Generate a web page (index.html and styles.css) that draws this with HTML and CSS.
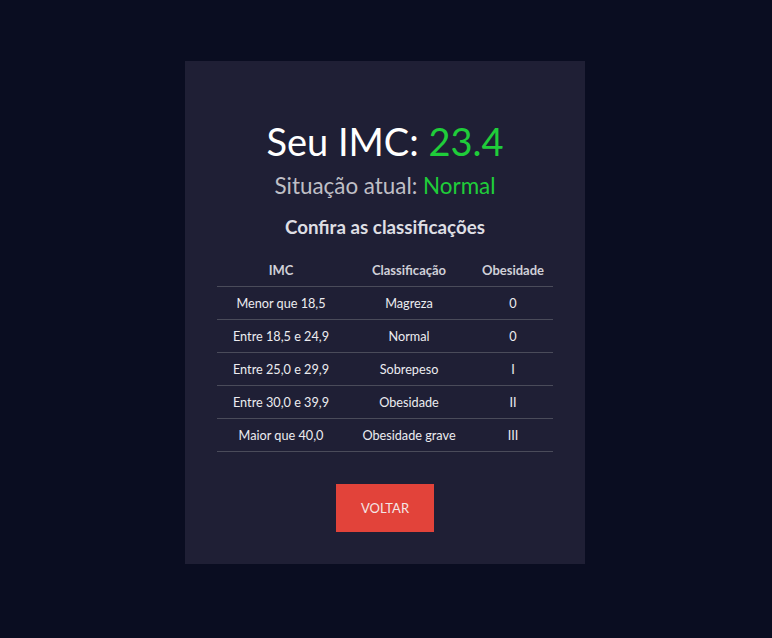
FILE: index.html
```html
<!DOCTYPE html>
<html lang="pt-BR">
<head>
<meta charset="utf-8">
<title>Resultado IMC</title>
<link rel="stylesheet" href="styles.css">
</head>
<body>
<main class="page">
  <section class="card">
    <h1 class="title">Seu IMC: <span class="green">23.4</span></h1>
    <p class="status">Situação atual: <span class="green">Normal</span></p>
    <h2 class="subtitle">Confira as classificações</h2>
    <table class="table">
      <colgroup>
        <col class="col-imc">
        <col class="col-class">
        <col class="col-ob">
      </colgroup>
      <thead>
        <tr><th>IMC</th><th>Classificação</th><th>Obesidade</th></tr>
      </thead>
      <tbody>
        <tr><td>Menor que 18,5</td><td>Magreza</td><td>0</td></tr>
        <tr><td>Entre 18,5 e 24,9</td><td>Normal</td><td>0</td></tr>
        <tr><td>Entre 25,0 e 29,9</td><td>Sobrepeso</td><td>I</td></tr>
        <tr><td>Entre 30,0 e 39,9</td><td>Obesidade</td><td>II</td></tr>
        <tr><td>Maior que 40,0</td><td>Obesidade grave</td><td>III</td></tr>
      </tbody>
    </table>
    <button class="btn" type="button">VOLTAR</button>
  </section>
</main>
</body>
</html>
```

FILE: styles.css
```css
* { box-sizing: border-box; }
html, body {
  margin: 0;
  padding: 0;
  background: #0a0d21;
  font-family: Lato, "Open Sans", sans-serif;
}
.page {
  display: flex;
  justify-content: center;
  padding-top: 61px;
  padding-right: 2px;
  min-height: 638px;
}
.card {
  width: 400px;
  height: 503px;
  background: #1f1f35;
  display: flex;
  flex-direction: column;
  align-items: center;
  padding-top: 56px;
}
.title {
  margin: 0;
  font-size: 38px;
  font-weight: 400;
  color: #ffffff;
  line-height: 48px;
}
.green { color: #1fcd3a; }
.status {
  margin: 6px 0 0;
  font-size: 22.4px;
  line-height: 30px;
  color: #bfbfc6;
}
.subtitle {
  margin: 14px 0 0;
  font-size: 18.75px;
  font-weight: 700;
  line-height: 24px;
  color: #dedee3;
}
.table {
  margin-top: 15px;
  width: 336px;
  table-layout: fixed;
  border-collapse: collapse;
  color: #ffffff;
  font-size: 12.7px;
}
.col-imc { width: 128px; }
.col-class { width: 128px; }
.col-ob { width: 80px; }
.table th {
  font-size: 13px;
  font-weight: 700;
  color: #d0d0d8;
  height: 32px;
  padding: 0;
  white-space: nowrap;
  border-bottom: 1px solid #4a4b5a;
}
.table td {
  text-align: center;
  height: 33px;
  padding: 0;
  white-space: nowrap;
  border-bottom: 1px solid #4a4b5a;
  color: #ececf0;
}
.btn {
  margin-top: 32px;
  width: 98px;
  height: 48px;
  border: none;
  background: #e2433a;
  color: #f4e6e6;
  font-family: Lato, sans-serif;
  font-size: 13px;
}
```
